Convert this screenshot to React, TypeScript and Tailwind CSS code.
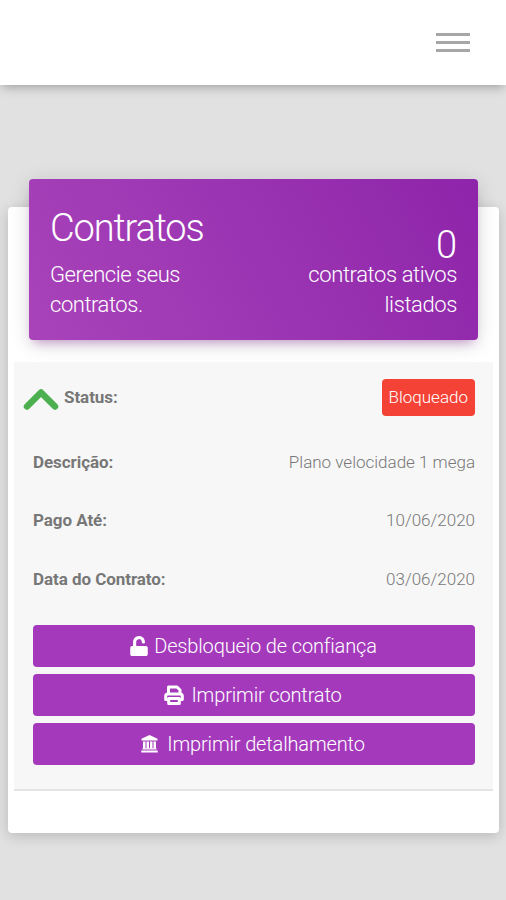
import { FaUnlock } from "react-icons/fa";

function PrintIcon() {
    return (
        <svg className="h-5 w-5" viewBox="0 0 20 20" fill="none" stroke="currentColor" strokeWidth="3" strokeLinejoin="round">
            <path d="M4.5 9V2h8.5l3 3v4" />
            <path d="M4 14.5H1.7v-3.3Q1.7 9 4 9h12q2.3 0 2.3 2.2v3.3H16" />
            <path d="M4.7 13.5h10.6v5H4.7z" />
        </svg>
    );
}

function BankIcon() {
    return (
        <svg className="h-[18px] w-[17px]" viewBox="0 0 17 18" fill="currentColor">
            <path d="M8.5 0 16.5 3.8v1.7H.5V3.8z" />
            <path d="M2 6.5h2.5v7H2zM5.5 6.5H8v7H5.5zM9 6.5h2.5v7H9zM12.5 6.5H15v7h-2.5z" />
            <path d="M1.5 13.2h14v1.4h-14zM.3 15.6h16.4v2H.3z" />
        </svg>
    );
}

const details = [
    { label: "Descrição:", value: "Plano velocidade 1 mega" },
    { label: "Pago Até:", value: "10/06/2020" },
    { label: "Data do Contrato:", value: "03/06/2020" },
];

const actions = [
    { label: "Desbloqueio de confiança", icon: <FaUnlock size={20} />, gap: "gap-[5px]" },
    { label: "Imprimir contrato", icon: <PrintIcon />, gap: "gap-[7px]" },
    { label: "Imprimir detalhamento", icon: <BankIcon />, gap: "gap-[9px]" },
];

export default function App() {
    return (
        <div className="h-[900px] w-[506px] overflow-hidden bg-[#e1e1e1] font-[Roboto,sans-serif]">
            <header className="flex h-[85px] items-center justify-end bg-white pr-9 shadow-[0_4px_10px_-2px_rgba(0,0,0,0.3)]">
                <button type="button" aria-label="Menu" className="flex w-[34px] flex-col gap-[5px]">
                    <span className="h-[3px] bg-[#a6a6a6]" />
                    <span className="h-[3px] bg-[#a6a6a6]" />
                    <span className="h-[3px] bg-[#a6a6a6]" />
                </button>
            </header>
            <main className="mx-2 mt-[122px] h-[626px] w-[491px] rounded-[4px] bg-white px-[6px] shadow-[0_3px_14px_rgba(0,0,0,0.18)]">
                <div className="relative -top-[28px] mx-[15px] flex h-[161px] justify-between rounded-[4px] bg-linear-60 from-[#a943ba] to-[#8e24aa] px-[21px] text-white shadow-[0_4px_20px_rgba(0,0,0,0.14),0_7px_10px_-5px_rgba(156,39,176,0.4)]">
                    <div>
                        <h4 className="mt-[26px] text-[38px] leading-[46px] font-light tracking-[-1.15px]">Contratos</h4>
                        <p className="mt-[9px] w-[180px] text-[22px] leading-[30px] font-light tracking-[-0.45px]">Gerencie seus contratos.</p>
                    </div>
                    <div className="text-right">
                        <h4 className="mt-[47px] text-[38px] leading-[38px] font-light">0</h4>
                        <p className="-mt-[4px] w-[170px] text-[22px] leading-[30px] font-light tracking-[-0.4px]">contratos ativos listados</p>
                    </div>
                </div>
                <section className="-mt-[6px] h-[429px] border-b-2 border-[#e4e4e4] bg-[#f7f7f7] px-[18px] pt-[17px] text-[17px] text-[#777]">
                    <div className="flex h-[37px] items-center">
                        <svg className="-ml-[9px] h-6 w-9" viewBox="0 0 36 24" fill="none" stroke="#4caf50" strokeWidth="6.5" strokeLinejoin="round" strokeLinecap="round">
                            <path d="M4 20.5 18 6.5 32 20.5" />
                        </svg>
                        <b className="ml-[5px] tracking-[-0.05px]">Status:</b>
                        <span className="ml-auto h-[37px] rounded-[4px] bg-[#f44336] px-[7px] leading-[37px] font-light text-white">Bloqueado</span>
                    </div>
                    <dl className="mt-[17px]">
                        {details.map(({ label, value }) => (
                            <div key={label} className="flex h-[58.5px] items-center justify-between pl-px">
                                <dt className="font-bold tracking-[-0.06px]">{label}</dt>
                                <dd className="font-light">{value}</dd>
                            </div>
                        ))}
                    </dl>
                    <div className="mt-[16.5px] flex flex-col gap-[7px] pl-px">
                        {actions.map(({ label, icon, gap }) => (
                            <button
                                key={label}
                                type="button"
                                className={`flex h-[42px] items-center justify-center rounded-[4px] bg-[#a43abb] pr-[2px] text-[20px] font-light tracking-[-0.15px] text-white ${gap}`}
                            >
                                {icon}
                                {label}
                            </button>
                        ))}
                    </div>
                </section>
            </main>
        </div>
    );
}
